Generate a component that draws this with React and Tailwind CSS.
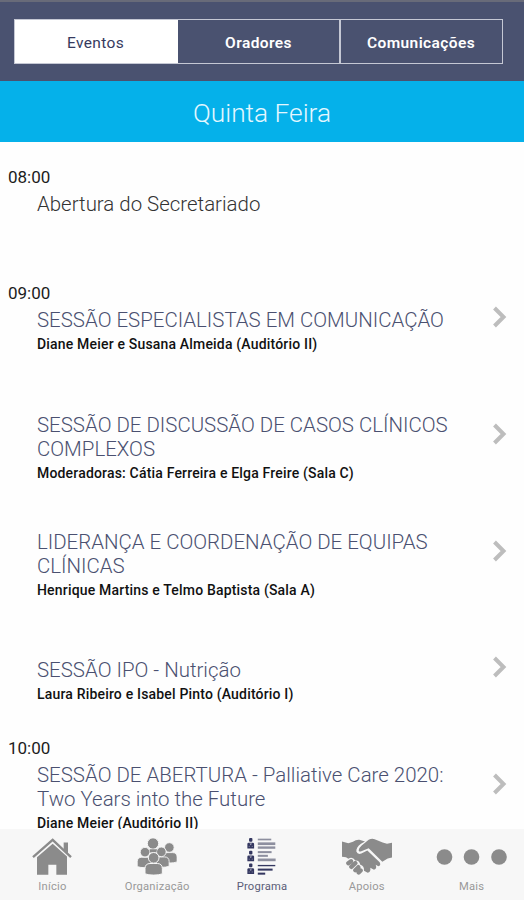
import React from 'react';

const tabs = ['Eventos', 'Oradores', 'Comunicações'];

const sessions = [
  { time: '08:00', title: ['Abertura do Secretariado'], people: '', plain: true },
  { time: '09:00', title: ['SESSÃO ESPECIALISTAS EM COMUNICAÇÃO'], people: 'Diane Meier e Susana Almeida (Auditório II)' },
  { time: '', title: ['SESSÃO DE DISCUSSÃO DE CASOS CLÍNICOS', 'COMPLEXOS'], people: 'Moderadoras: Cátia Ferreira e Elga Freire (Sala C)' },
  { time: '', title: ['LIDERANÇA E COORDENAÇÃO DE EQUIPAS', 'CLÍNICAS'], people: 'Henrique Martins e Telmo Baptista (Sala A)' },
  { time: '', title: ['SESSÃO IPO - Nutrição'], people: 'Laura Ribeiro e Isabel Pinto (Auditório I)' },
  { time: '10:00', title: ['SESSÃO DE ABERTURA - Palliative Care 2020:', 'Two Years into the Future'], people: 'Diane Meier (Auditório II)' },
];

const HomeIcon = () => (
  <svg viewBox="0 0 120 110" className="w-10 h-[37px]" fill="#8b8b8b">
    <path d="M3 57 L62 5 L117 57" fill="none" stroke="#8b8b8b" strokeWidth="7" />
    <path d="M95 13h13v33l-13-12z" />
    <path d="M62 17 L105 55 V110 H73 V80 H49 V110 H15 V57z" />
  </svg>
);

const Person = ({ x, y, s = 1 }) => (
  <g transform={`translate(${x} ${y}) scale(${s})`}>
    <path d="M-26 48V32c0-10 6-15 15-15h22c9 0 15 5 15 15v16c-12 5-40 5-52 0z" />
    <circle r="16" />
  </g>
);

const GroupIcon = () => (
  <svg viewBox="0 0 120 110" className="w-10 h-[37px]" fill="#8b8b8b" stroke="#f7f7f7" strokeWidth="3">
    <Person x={97} y={28} s={0.9} />
    <Person x={73} y={41} s={0.9} />
    <Person x={24} y={42} s={0.9} />
    <circle cx="48" cy="16" r="17" />
    <path d="M38 33h22l-2 10H38z" stroke="none" />
    <Person x={50} y={59} />
  </svg>
);

const ProgramIcon = () => (
  <svg viewBox="0 0 86 110" className="w-[29px] h-[37px]">
    {[0, 38, 76].map(y => (
      <g key={y} transform={`translate(0 ${y})`} fill="#343760">
        <rect x="6" y="0" width="10" height="11" rx="3" />
        <path d="M1 31V18q0-4 4-4h12q4 0 4 4v13z" />
        <path d="M9 15l2 6 2-6M5 25h3M14 25h3" stroke="#d5d6df" strokeWidth="1.5" fill="none" />
      </g>
    ))}
    <g fill="#8d8f9f">
      <rect x="32" y="2" width="40" height="5" />
      <rect x="32" y="13" width="52" height="8" />
      <rect x="32" y="25" width="52" height="7" />
      <rect x="32" y="39" width="41" height="6" />
      <rect x="32" y="50" width="30" height="6" />
      <rect x="32" y="61" width="53" height="8" />
    </g>
    <g fill="#343760">
      <rect x="32" y="80" width="52" height="4" />
      <rect x="32" y="91" width="44" height="6" />
      <rect x="32" y="103" width="22" height="6" />
    </g>
  </svg>
);

const HandshakeIcon = () => (
  <svg viewBox="0 0 150 110" className="w-[50px] h-[37px]" fill="#8b8b8b">
    <path d="M0 10 L19 15 L33 11 Q42 4 52 5 L69 10 L57 17 Q42 28 43 40 Q47 50 58 46 L76 37 L113 72 Q118 82 109 84 L101 80 Q106 92 96 95 L85 89 Q87 102 77 104 L66 98 Q67 83 55 80 Q52 66 40 67 Q31 54 19 62 L12 57 L0 56z" />
    <path d="M150 14 V58 L137 61 L121 71 L80 30 L58 39 Q50 42 50 36 Q51 29 59 22 L80 5 Q89 0 98 3 L122 13 L135 17z" />
    <path d="M19 75l8-6M28 86l12-11M40 96l9-9M50 103l6-6" stroke="#8b8b8b" strokeWidth="13" strokeLinecap="round" />
  </svg>
);

const DotsIcon = () => (
  <svg viewBox="0 0 72 37" className="w-[72px] h-[37px]" fill="#8b8b8b">
    <circle cx="8.5" cy="19" r="7.8" />
    <circle cx="35.5" cy="19" r="7.8" />
    <circle cx="63" cy="19" r="7.8" />
  </svg>
);

const navItems = [
  { label: 'Início', icon: HomeIcon },
  { label: 'Organização', icon: GroupIcon },
  { label: 'Programa', icon: ProgramIcon, active: true },
  { label: 'Apoios', icon: HandshakeIcon },
  { label: 'Mais', icon: DotsIcon },
];

const SessionRow = ({ session }) => (
  <li className="h-[116.6px] shrink-0 flex items-center pl-2 pr-[17.5px]">
    <div className="flex-1 whitespace-nowrap">
      <div className="h-[30px] leading-[30px] text-[17px] text-[#1c1c1c]">{session.time}</div>
      <div className="pl-[29px]">
        {session.title.map(line => (
          <div
            key={line}
            className={`text-[20.45px] leading-6 font-light ${session.plain ? 'text-[#333333]' : 'text-[#4a5070]'}`}
          >
            {line}
          </div>
        ))}
        <div className="h-6 leading-6 text-[14px] tracking-[0.18px] font-medium text-[#111111]">{session.people}</div>
      </div>
    </div>
    {!session.plain && (
      <svg viewBox="0 0 15 22" className="w-[15px] h-[22px]">
        <path d="M2.5 2 L11.5 11 L2.5 20" fill="none" stroke="#bdbdbd" strokeWidth="4" />
      </svg>
    )}
  </li>
);

export default function App() {
  return (
    <div className="w-[524px] h-[900px] flex flex-col overflow-hidden bg-[#fefefe] font-['Roboto',sans-serif]">
      <header className="h-[81px] shrink-0 bg-[#4a5270] border-t-2 border-[#686b79] pl-[14px] pt-[17px]">
        <div className="h-[45px] grid grid-cols-[163px_163px_163px] border border-[#c5c8d4] w-[489px]">
          {tabs.map((tab, i) => (
            <button
              key={tab}
              className={`pt-[4px] text-[15.5px] ${
                i === 0
                  ? 'bg-white text-[#363a5e] tracking-[0.35px] pr-[2px]'
                  : 'text-white font-semibold tracking-[0.4px] border-r-2 border-[#c5c8d4] last:border-r-0 last:pr-[3px]'
              }`}
            >
              {tab}
            </button>
          ))}
        </div>
      </header>
      <h1 className="h-[61px] shrink-0 bg-[#05b1ea] text-[#e3f7ff] text-[26.3px] font-light text-center leading-[65px]">
        Quinta Feira
      </h1>
      <ul className="flex-1 min-h-0 overflow-hidden flex flex-col pt-[0.6px]">
        {sessions.map(session => (
          <SessionRow key={session.title[0]} session={session} />
        ))}
      </ul>
      <nav className="h-[71px] shrink-0 bg-[#f7f7f7] grid grid-cols-5 pt-[9px]">
        {navItems.map(({ label, icon: Icon, active }) => (
          <a key={label} className="flex flex-col items-center">
            <Icon />
            <span className={`mt-[4px] text-[11.2px] leading-4 tracking-[0.2px] ${active ? 'text-[#5c5e78]' : 'text-[#999999]'}`}>
              {label}
            </span>
          </a>
        ))}
      </nav>
    </div>
  );
}
